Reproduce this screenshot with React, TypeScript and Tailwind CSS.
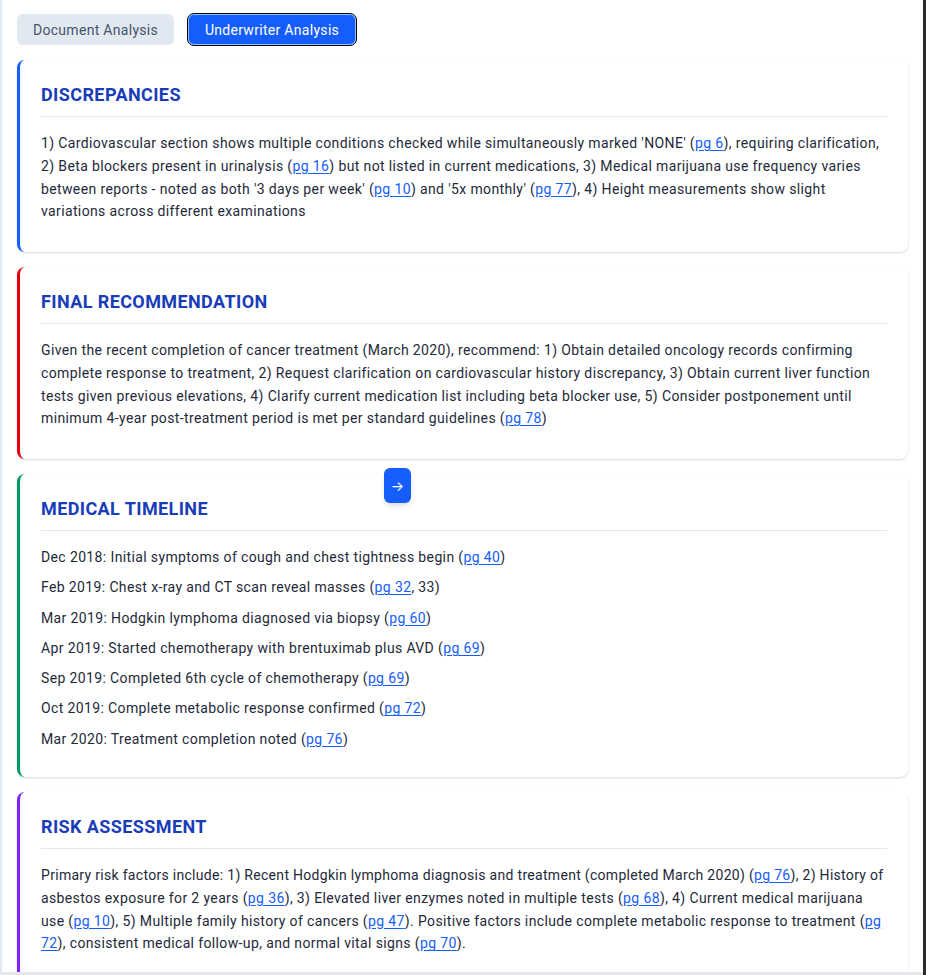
import React from "react";

type Part = string | { pg: string };

const Pg = ({ n }: { n: string }) => (
  <a href="#" className="text-blue-600 underline underline-offset-2">
    {n}
  </a>
);

const render = (parts: Part[]) =>
  parts.map((p, i) => (typeof p === "string" ? <React.Fragment key={i}>{p}</React.Fragment> : <Pg key={i} n={p.pg} />));

const DISCREPANCIES: Part[] = [
  "1) Cardiovascular section shows multiple conditions checked while simultaneously marked 'NONE' (",
  { pg: "pg 6" },
  "), requiring clarification, 2) Beta blockers present in urinalysis (",
  { pg: "pg 16" },
  ") but not listed in current medications, 3) Medical marijuana use frequency varies between reports - noted as both '3 days per week' (",
  { pg: "pg 10" },
  ") and '5x monthly' (",
  { pg: "pg 77" },
  "), 4) Height measurements show slight variations across different examinations",
];

const RECOMMENDATION: Part[] = [
  "Given the recent completion of cancer treatment (March 2020), recommend: 1) Obtain detailed oncology records confirming complete response to treatment, 2) Request clarification on cardiovascular history discrepancy, 3) Obtain current liver function tests given previous elevations, 4) Clarify current medication list including beta blocker use, 5) Consider postponement until minimum 4-year post-treatment period is met per standard guidelines (",
  { pg: "pg 78" },
  ")",
];

const TIMELINE: Part[][] = [
  ["Dec 2018: Initial symptoms of cough and chest tightness begin (", { pg: "pg 40" }, ")"],
  ["Feb 2019: Chest x-ray and CT scan reveal masses (", { pg: "pg 32" }, ", 33)"],
  ["Mar 2019: Hodgkin lymphoma diagnosed via biopsy (", { pg: "pg 60" }, ")"],
  ["Apr 2019: Started chemotherapy with brentuximab plus AVD (", { pg: "pg 69" }, ")"],
  ["Sep 2019: Completed 6th cycle of chemotherapy (", { pg: "pg 69" }, ")"],
  ["Oct 2019: Complete metabolic response confirmed (", { pg: "pg 72" }, ")"],
  ["Mar 2020: Treatment completion noted (", { pg: "pg 76" }, ")"],
];

const RISK_HEAD: Part[] = [
  "Primary risk factors include: 1) Recent Hodgkin lymphoma diagnosis and treatment (completed March 2020) (",
  { pg: "pg 76" },
  "), 2) History of",
];

const RISK: Part[] = [
  " asbestos exposure for 2 years (",
  { pg: "pg 36" },
  "), 3) Elevated liver enzymes noted in multiple tests (",
  { pg: "pg 68" },
  "), 4) Current medical marijuana use (",
  { pg: "pg 10" },
  "), 5) Multiple family history of cancers (",
  { pg: "pg 47" },
  "). Positive factors include complete metabolic response to treatment (",
  { pg: "pg 72" },
  "), consistent medical follow-up, and normal vital signs (",
  { pg: "pg 70" },
  ").",
];

function Card({ title, border, children, pb }: { title: string; border: string; children: React.ReactNode; pb: string }) {
  return (
    <section className={`bg-white rounded-lg border-l-[3px] ${border} shadow-[0_1px_3px_rgba(0,0,0,0.1),0_1px_2px_rgba(0,0,0,0.06)] px-[21px] pt-[21px] ${pb}`}>
      <h2 className="text-lg leading-7 font-bold tracking-[0.4px] text-blue-800 pb-[7px] border-b border-slate-200 mb-[15px]">{title}</h2>
      {children}
    </section>
  );
}

export default function App() {
  return (
    <div className="w-[926px] h-[975px] overflow-hidden flex bg-white text-gray-800" style={{ fontFamily: "Roboto, 'Noto Sans', sans-serif" }}>
      <div className="relative flex-1 overflow-hidden border-l-2 border-l-slate-200 border-b-[3px] border-b-gray-200 px-[15px] pt-[14px]">
        {/* Tabs */}
        <div className="flex items-center gap-[14px] tracking-[0.3px]">
          <button className="h-[31px] w-[157px] rounded-md bg-slate-200 text-sm text-slate-600">Document Analysis</button>
          <button className="h-[31px] w-[168px] rounded-md bg-blue-600 text-sm text-white outline outline-1 outline-black shadow-[inset_0_0_0_1px_#93c5fd]">
            Underwriter Analysis
          </button>
        </div>

        <div className="mt-[15px] flex flex-col gap-[15px] tracking-[0.37px]">
          <Card title="DISCREPANCIES" border="border-l-blue-600" pb="pb-[29px]">
            <p className="text-sm leading-relaxed">{render(DISCREPANCIES)}</p>
          </Card>

          <Card title="FINAL RECOMMENDATION" border="border-l-red-600" pb="pb-[29px]">
            <p className="text-sm leading-relaxed">{render(RECOMMENDATION)}</p>
          </Card>

          <Card title="MEDICAL TIMELINE" border="border-l-emerald-600" pb="pb-[27px]">
            <div className="flex flex-col gap-2">
              {TIMELINE.map((row, i) => (
                <p key={i} className="text-sm leading-[22.3px]">
                  {render(row)}
                </p>
              ))}
            </div>
          </Card>

          <Card title="RISK ASSESSMENT" border="border-l-violet-600" pb="pb-[29px]">
            <p className="text-sm leading-relaxed">
              <span className="tracking-[0.3px]">{render(RISK_HEAD)}</span>
              {render(RISK)}
            </p>
          </Card>
        </div>

        {/* floating arrow */}
        <button className="absolute left-[382px] top-[468px] w-[27px] h-[35px] flex items-center justify-center rounded-md bg-blue-600 text-white text-sm shadow-md" style={{ fontFamily: "Inter, sans-serif" }}>
          →
        </button>
      </div>
      <div className="w-[3px] bg-[#2b2b2b]" />
    </div>
  );
}
